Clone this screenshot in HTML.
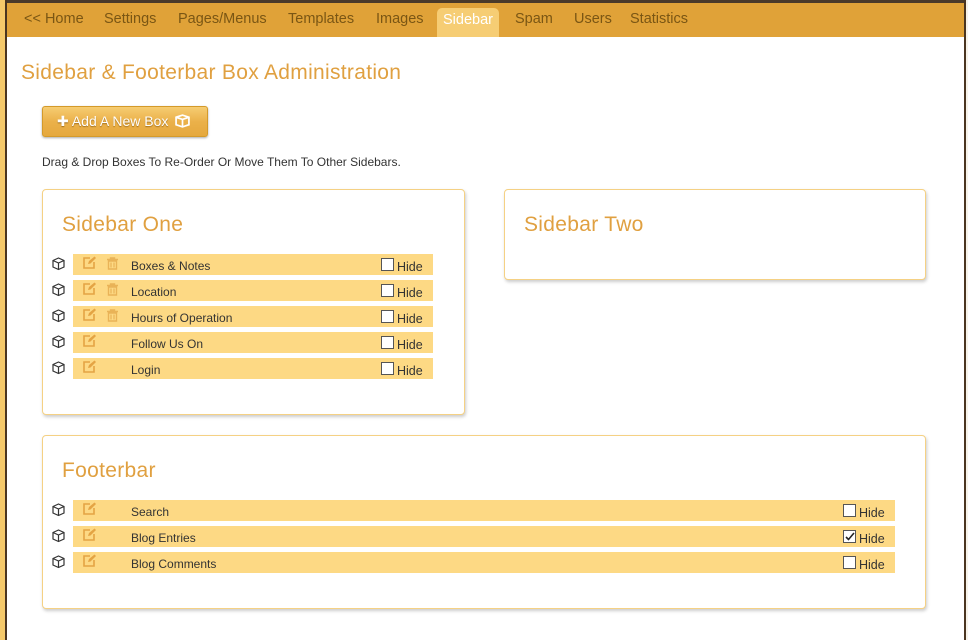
<!DOCTYPE html>
<html><head><meta charset="utf-8"><style>
*{box-sizing:border-box;margin:0;padding:0}
body{width:968px;height:640px;overflow:hidden;background:#fff;font-family:"Liberation Sans",sans-serif;position:relative}
.top{position:absolute;left:0;top:0;width:968px;height:3px;background:#4a3a2a}
.lstrip{position:absolute;left:0;top:0;width:5px;height:640px;background:#f5c96a}
.lline{position:absolute;left:5px;top:0;width:2px;height:640px;background:#4a3520}
.rline{position:absolute;left:964px;top:0;width:2px;height:640px;background:#4a3520}
.rstrip{position:absolute;left:966px;top:0;width:2px;height:640px;background:#f7f3ea}
.nav{position:absolute;left:7px;top:3px;width:957px;height:34px;background:#e0a238}
.nav span{position:absolute;top:8px;font-size:14.5px;color:#7a5614}
.nav .act{top:5px;height:29px;background:#f6cd74;color:#fff;border-radius:5px 5px 0 0;padding:4px 6px 0}
h1{position:absolute;left:21px;top:61px;font-size:21px;letter-spacing:0.3px;font-weight:normal;color:#e0a040}
.btn{position:absolute;left:42px;top:106px;width:166px;height:31px;border:1px solid #d49a2a;border-radius:3px;background:linear-gradient(#f6cd72,#ebb14a 50%,#e5a83d);color:#fff;font-size:14px;padding:6px 0 0 14px;text-shadow:0 1px 1px #a07020;box-shadow:0 1px 2px #aaa}
.drag{position:absolute;left:42px;top:155px;font-size:12px;color:#333}
.box{position:absolute;border:1px solid #f5d184;border-radius:4px;box-shadow:1px 2px 3px #ccc;background:#fff}
.box h2{position:absolute;left:19px;top:23px;font-size:21px;letter-spacing:0.3px;font-weight:normal;color:#e0a040}
.row{position:absolute;height:21px;background:#fdd984;font-size:12px;color:#333}
.row .t{position:absolute;left:58px;top:5px}
.row .cb{position:absolute;top:4px;width:13px;height:13px;border:1px solid #555;background:#fff}
.row .h{position:absolute;top:6px;font-size:12.5px}
.cube{position:absolute;left:-21px;top:3px}
.ed{position:absolute;left:10px;top:2px}
.tr{position:absolute;left:33px;top:3px}
</style></head><body>
<div class="top"></div><div class="lstrip"></div><div class="lline"></div><div class="rline"></div><div class="rstrip"></div>
<div class="nav">
<span style="left:17px">&lt;&lt; Home</span>
<span style="left:97px">Settings</span>
<span style="left:171px">Pages/Menus</span>
<span style="left:281px">Templates</span>
<span style="left:369px">Images</span>
<span class="act" style="left:430px">Sidebar</span>
<span style="left:508px">Spam</span>
<span style="left:567px">Users</span>
<span style="left:623px">Statistics</span>
</div>
<h1>Sidebar &amp; Footerbar Box Administration</h1>
<div class="btn">✚ Add A New Box <svg width="15" height="14" viewBox="0 0 14 13" style="vertical-align:-2px;margin-left:3px"><path d="M1 3L7 1L13 3V10L7 12L1 10Z M1 3L7 5L13 3 M7 5V12" fill="none" stroke="#fff" stroke-width="1.6"/></svg></div>
<div class="drag">Drag &amp; Drop Boxes To Re-Order Or Move Them To Other Sidebars.</div>

<div class="box" style="left:42px;top:189px;width:423px;height:226px"><h2>Sidebar One</h2></div>
<div class="box" style="left:504px;top:189px;width:422px;height:91px"><h2>Sidebar Two</h2></div>
<div class="box" style="left:42px;top:435px;width:884px;height:174px"><h2>Footerbar</h2></div>

<svg width="0" height="0" style="position:absolute"><defs>
<g id="cube"><path d="M1 3.5L6.5 1L12 3.5V10L6.5 12.5L1 10Z M1 3.5L6.5 6L12 3.5 M6.5 6V12.5" fill="none" stroke="#333" stroke-width="1.2"/></g>
<g id="ed"><path d="M11 6V12H1V2H7" fill="none" stroke="#e4a444" stroke-width="1.6"/><path d="M5 8L6 5L11.5 0.5L13 2L7.5 7.5Z" fill="#e4a444"/></g>
<g id="tr"><path d="M1 2.5H12M4.5 2.5V1H8.5V2.5M2.5 4H10.5V12H2.5Z" fill="none" stroke="#e9b357" stroke-width="1.4"/><path d="M5 5.5V10.5M8 5.5V10.5" stroke="#e9b357" stroke-width="1.2"/></g>
</defs></svg>

<div id="rows"></div>
<script>
var d=document.getElementById('rows'),h='';
function row(x,y,w,t,trash,cbx,chk){
h+='<div class="row" style="left:'+x+'px;top:'+y+'px;width:'+w+'px">'+
'<svg class="cube" width="14" height="14"><use href="#cube"/></svg>'+
'<svg class="ed" width="14" height="13"><use href="#ed"/></svg>'+
(trash?'<svg class="tr" width="13" height="13"><use href="#tr"/></svg>':'')+
'<span class="t">'+t+'</span><span class="cb" style="left:'+cbx+'px">'+(chk?'<svg width="11" height="11" style="position:absolute;left:0;top:0"><path d="M2 6L4.5 8.5L10 2" fill="none" stroke="#222" stroke-width="1.6"/></svg>':'')+'</span><span class="h" style="left:'+(cbx+16)+'px">Hide</span></div>';}
var s=['Boxes &amp; Notes','Location','Hours of Operation','Follow Us On','Login'];
for(var i=0;i<5;i++)row(73,254+26*i,360,s[i],i<3,308,false);
var f=['Search','Blog Entries','Blog Comments'];
for(var i=0;i<3;i++)row(73,500+26*i,822,f[i],false,770,i==1);
d.innerHTML=h;
</script>
</body></html>
